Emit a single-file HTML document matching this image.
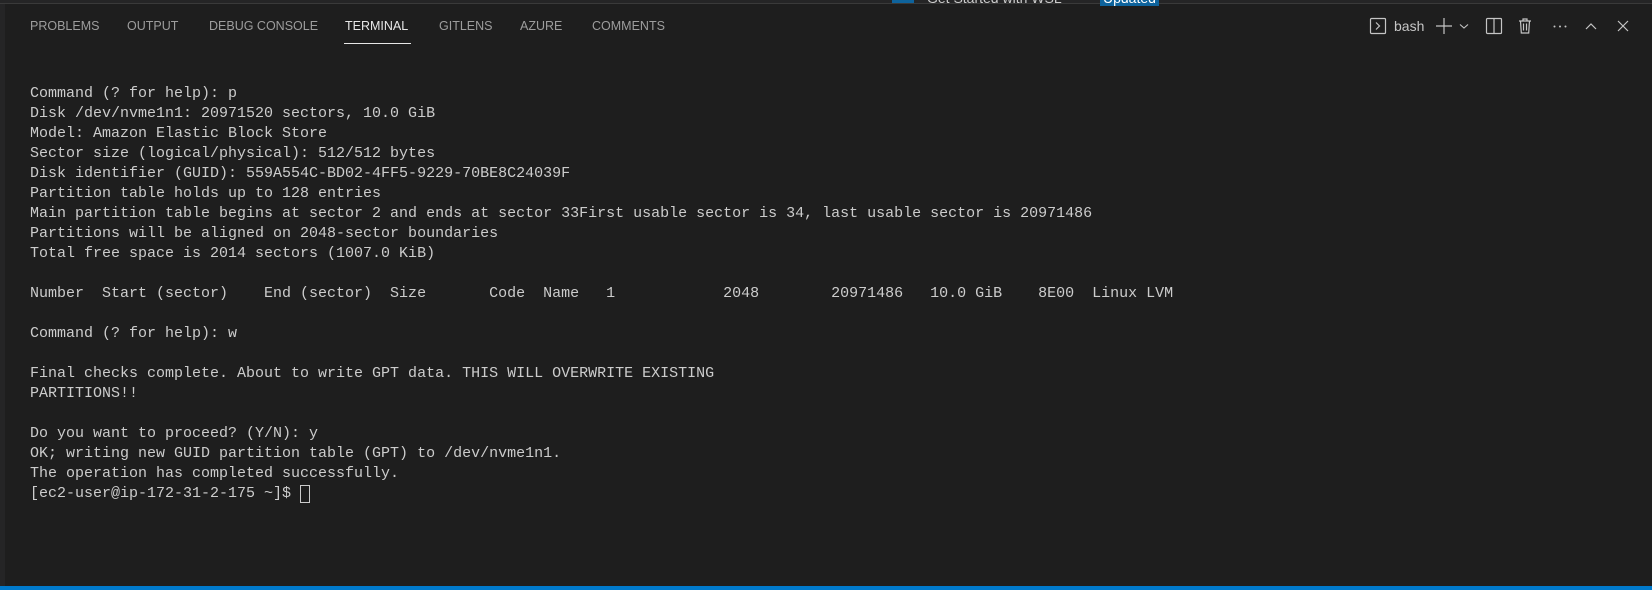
<!DOCTYPE html>
<html><head><meta charset="utf-8"><style>
html,body{margin:0;padding:0;}
body{width:1652px;height:590px;background:#1e1e1e;position:relative;overflow:hidden;font-family:"Liberation Sans",sans-serif;}
.topline{position:absolute;left:0;top:0;width:1652px;height:3px;background:#252526;border-bottom:1px solid #3a3a3a;}
.leftbar{position:absolute;left:0;top:4px;width:5px;height:582px;background:#252526;}
.wsl{position:absolute;left:892px;top:-10px;font-size:14px;color:#ccc;white-space:nowrap;}
.wsl .b{position:absolute;left:208px;background:#0e639c;color:#fff;padding:0 3px;}
.wsl .i{display:inline-block;width:22px;height:13px;background:#0e639c;margin-right:13px;}
.tabs{position:absolute;top:19px;left:0;font-size:12.5px;color:#9d9d9d;}
.tabs span{position:absolute;white-space:nowrap;}
.tabs .act{color:#e7e7e7;}
.ul{position:absolute;left:344px;top:43px;width:67px;height:1px;background:#e7e7e7;}
.term{position:absolute;left:30px;top:84px;font-family:"Liberation Mono",monospace;font-size:15px;line-height:20px;color:#cccccc;white-space:pre;margin:0;}
.cur{display:inline-block;width:8px;height:16px;border:1px solid #ccc;vertical-align:top;margin-top:1px;box-sizing:border-box;width:10px;height:18px;}
.status{position:absolute;left:0;top:586px;width:1652px;height:4px;background:#007acc;}
.tb{position:absolute;top:17px;color:#c5c5c5;}
</style></head><body>
<div class="topline"></div>
<div class="leftbar"></div>
<div class="wsl"><span class="i"></span>Get Started with WSL<span class="b">Updated</span></div>
<div class="tabs">
<span style="left:30px">PROBLEMS</span>
<span style="left:127px">OUTPUT</span>
<span style="left:209px">DEBUG CONSOLE</span>
<span class="act" style="left:345px">TERMINAL</span>
<span style="left:439px">GITLENS</span>
<span style="left:520px">AZURE</span>
<span style="left:592px">COMMENTS</span>
</div>
<div class="ul"></div>

<svg class="tb" style="left:1369px" width="18" height="18" viewBox="0 0 18 18"><rect x="1.5" y="1.5" width="15" height="15" rx="1" fill="none" stroke="#c5c5c5" stroke-width="1.2"/><path d="M7 5.5l3.5 3.5L7 12.5" fill="none" stroke="#c5c5c5" stroke-width="1.2"/></svg>
<span class="tb" style="left:1394px;top:18px;font-size:14px;">bash</span>
<svg class="tb" style="left:1435px" width="18" height="18" viewBox="0 0 18 18"><path d="M9 1v16M1 9h16" stroke="#c5c5c5" stroke-width="1.2"/></svg>
<svg class="tb" style="left:1458px" width="12" height="18" viewBox="0 0 12 18"><path d="M2 7.5l4 3.5 4-3.5" fill="none" stroke="#c5c5c5" stroke-width="1.1"/></svg>
<svg class="tb" style="left:1485px" width="18" height="18" viewBox="0 0 18 18"><rect x="1.5" y="1.5" width="15" height="15" rx="1" fill="none" stroke="#c5c5c5" stroke-width="1.2"/><path d="M9 2v14" stroke="#c5c5c5" stroke-width="1.2"/></svg>
<svg class="tb" style="left:1516px" width="18" height="18" viewBox="0 0 18 18"><path d="M3 4h12M7 4V2h4v2M4.5 4l.8 12h7.4l.8-12M7.5 6.5v7M10.5 6.5v7" fill="none" stroke="#c5c5c5" stroke-width="1.2"/></svg>
<svg class="tb" style="left:1551px" width="18" height="18" viewBox="0 0 18 18"><circle cx="3.5" cy="9.5" r="1" fill="#c5c5c5"/><circle cx="9" cy="9.5" r="1" fill="#c5c5c5"/><circle cx="14.5" cy="9.5" r="1" fill="#c5c5c5"/></svg>
<svg class="tb" style="left:1582px" width="18" height="18" viewBox="0 0 18 18"><path d="M4 12l5-5 5 5" fill="none" stroke="#c5c5c5" stroke-width="1.2"/></svg>
<svg class="tb" style="left:1614px" width="18" height="18" viewBox="0 0 18 18"><path d="M4 4l10 10M14 4L4 14" stroke="#c5c5c5" stroke-width="1.2"/></svg>

<pre class="term">Command (? for help): p
Disk /dev/nvme1n1: 20971520 sectors, 10.0 GiB
Model: Amazon Elastic Block Store
Sector size (logical/physical): 512/512 bytes
Disk identifier (GUID): 559A554C-BD02-4FF5-9229-70BE8C24039F
Partition table holds up to 128 entries
Main partition table begins at sector 2 and ends at sector 33First usable sector is 34, last usable sector is 20971486
Partitions will be aligned on 2048-sector boundaries
Total free space is 2014 sectors (1007.0 KiB)

Number  Start (sector)    End (sector)  Size       Code  Name   1            2048        20971486   10.0 GiB    8E00  Linux LVM

Command (? for help): w

Final checks complete. About to write GPT data. THIS WILL OVERWRITE EXISTING
PARTITIONS!!

Do you want to proceed? (Y/N): y
OK; writing new GUID partition table (GPT) to /dev/nvme1n1.
The operation has completed successfully.
[ec2-user@ip-172-31-2-175 ~]$ <span class="cur"></span></pre>
<div class="status"></div>
</body></html>
